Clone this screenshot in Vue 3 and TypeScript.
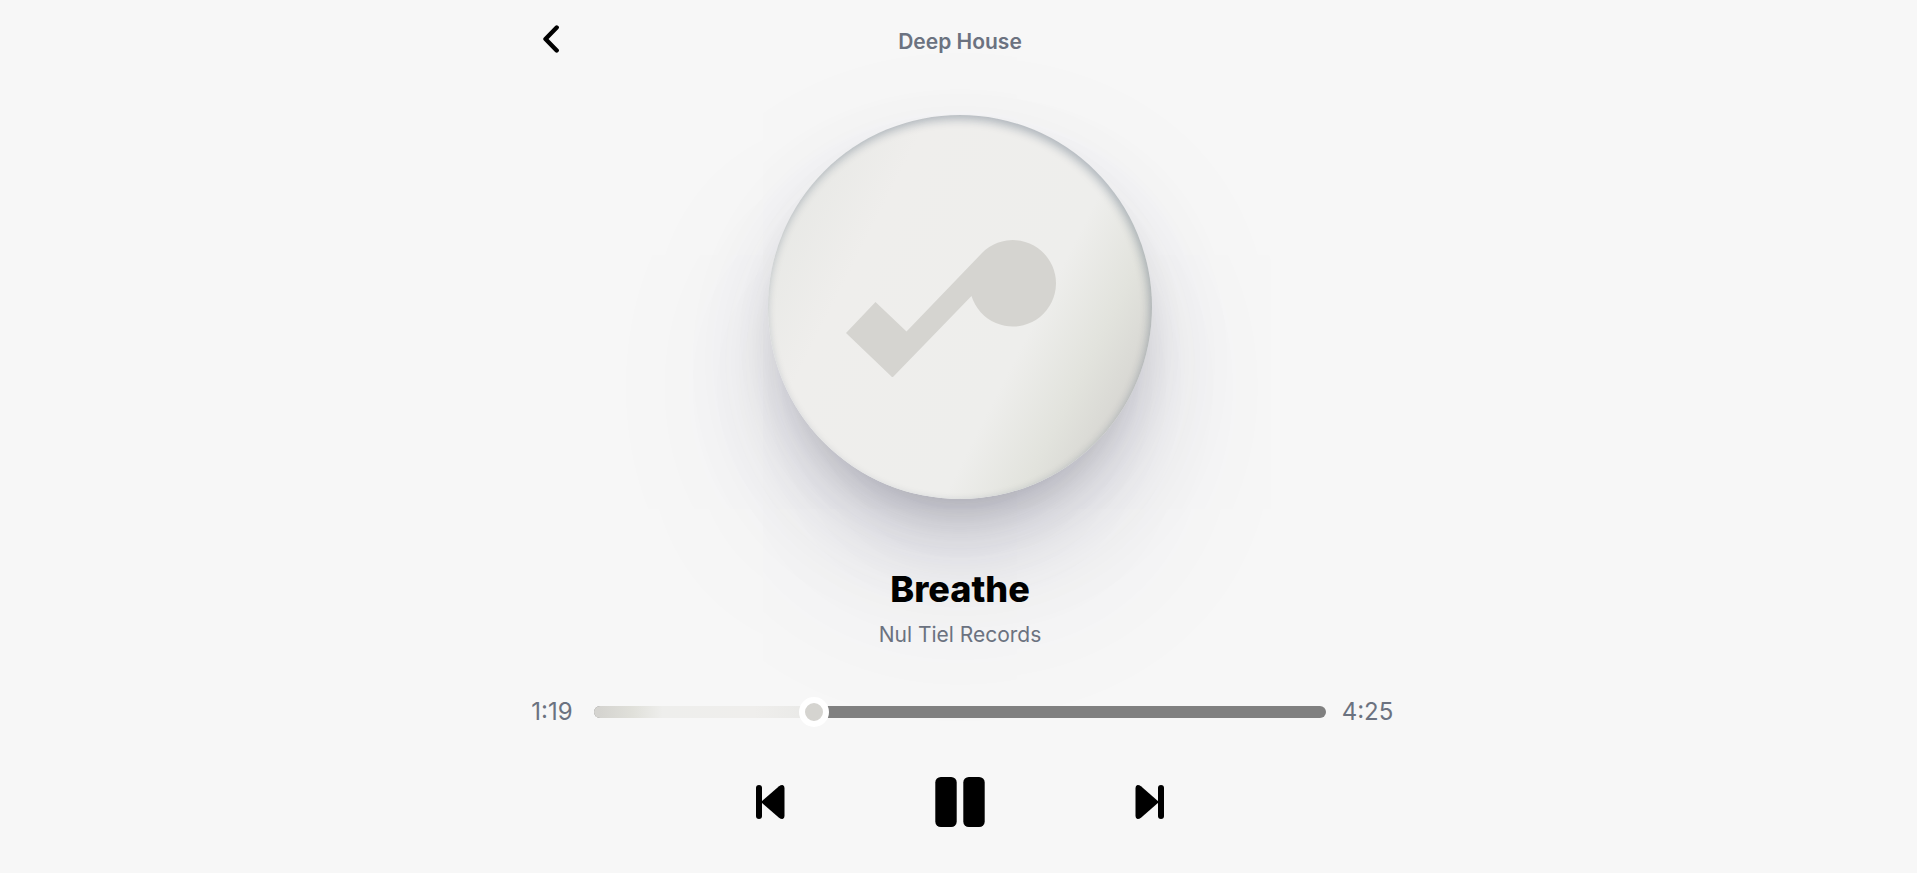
<script setup lang="ts">
import { computed, ref } from 'vue'

const track = { genre: 'Deep House', title: 'Breathe', artist: 'Nul Tiel Records' }
const duration = 265
const elapsed = ref(79)
const progress = ref(29.2)
const playing = ref(true)

function clock(seconds: number): string {
  return `${Math.floor(seconds / 60)}:${String(seconds % 60).padStart(2, '0')}`
}

function seek(): void {
  elapsed.value = Math.round((progress.value / 100) * duration)
}

const played = computed(() => `${progress.value}%`)
</script>

<template>
  <main class="page">
    <section class="player" aria-label="Music player">
      <header class="header">
        <button class="icon-button back" type="button" aria-label="Back">
          <svg width="16" height="28" viewBox="0 0 16 28" aria-hidden="true">
            <path d="M13.700 2.500 2.500 14 13.700 25.500" fill="none" stroke="#000" stroke-width="4.400" stroke-linecap="round" stroke-linejoin="round" />
          </svg>
        </button>
        <p class="genre">{{ track.genre }}</p>
      </header>

      <div class="cover">
        <svg class="cover-mark" viewBox="0 -3 228 140" aria-hidden="true">
          <path d="M0 93 29.500 62 60.500 91.500 136 13A43.200 43.200 0 1 1 125.500 56L46.500 137.500Z" />
        </svg>
      </div>

      <h1 class="title">{{ track.title }}</h1>
      <p class="artist">{{ track.artist }}</p>

      <div class="progress">
        <span class="time">{{ clock(elapsed) }}</span>
        <div class="slider">
          <div class="rail"><div class="fill" :style="{ width: played }"></div></div>
          <input v-model.number="progress" class="range" type="range" min="0" max="100" step="0.1" aria-label="Playback position" @input="seek" />
        </div>
        <span class="time end">{{ clock(duration) }}</span>
      </div>

      <div class="controls">
        <button class="icon-button" type="button" aria-label="Previous track">
          <svg width="30" height="36" viewBox="0 0 30 36" aria-hidden="true">
            <rect x="1" y="1" width="6" height="34" rx="3" />
            <path d="M6 18 24 2.200Q26 0.800 27.500 1Q29.500 1.500 29.500 4V32Q29.500 34.500 27.500 35Q26 35.200 24 33.800Z" />
          </svg>
        </button>
        <button class="icon-button" type="button" :aria-label="playing ? 'Pause' : 'Play'" @click="playing = !playing">
          <svg width="50" height="50" viewBox="0 0 50 50" aria-hidden="true">
            <template v-if="playing">
              <rect x="0.3" width="21.400" height="50" rx="5.500" />
              <rect x="28.300" width="21.400" height="50" rx="5.500" />
            </template>
            <path v-else d="M8 2 46 25 8 48Z" />
          </svg>
        </button>
        <button class="icon-button" type="button" aria-label="Next track">
          <svg width="30" height="36" viewBox="0 0 30 36" aria-hidden="true">
            <rect x="23" y="1" width="6" height="34" rx="3" />
            <path d="M24 18 6 2.200Q4 0.800 2.500 1Q0.500 1.500 0.500 4V32Q0.500 34.500 2.500 35Q4 35.200 6 33.800Z" />
          </svg>
        </button>
      </div>
    </section>
  </main>
</template>

<style>
body {
  margin: 0;
  background: #f7f7f7;
}
</style>

<style scoped>
.page {
  display: flex;
  justify-content: center;
  min-height: 100vh;
  box-sizing: border-box;
  padding-left: 3px;
  overflow: hidden;
  background: #f7f7f7;
  font-family: Inter, "Liberation Sans", sans-serif;
  color: #6b7280;
}
.player {
  display: flex;
  flex-direction: column;
  align-items: center;
  width: 45%;
  min-width: 480px;
}
.header {
  display: grid;
  grid-template-columns: 1fr auto 1fr;
  align-items: start;
  width: 100%;
  height: 115px;
  padding: 25px 14px 0;
  box-sizing: border-box;
}
.icon-button {
  display: flex;
  padding: 0;
  border: 0;
  background: none;
  color: #000;
  cursor: pointer;
}
.back {
  justify-self: start;
}
.genre {
  margin: 3px 0 0;
  font-size: 21px;
  line-height: 28px;
  font-weight: 600;
}
.cover {
  display: grid;
  place-items: center;
  width: 384px;
  height: 384px;
  border-radius: 50%;
  background: linear-gradient(117deg, #e6e7e4 8%, #efeeec 28%, #eeeeec 64%, #e2e3dd 77%, #d5d4d0 89%);
  box-shadow:
    0 80px 200px rgba(50, 50, 93, 0.08),
    0 54px 100px -20px rgba(50, 50, 93, 0.24),
    0 30px 60px -30px rgba(0, 0, 0, 0.24),
    inset -2px 4px 10px rgba(10, 37, 64, 0.28);
}
.cover-mark {
  width: 228px;
  height: 140px;
  fill: #d5d4d0;
}
.title {
  margin: 66px 0 0;
  font-size: 36px;
  line-height: 48px;
  font-weight: 800;
  color: #000;
}
.artist {
  margin: 8px 0 0;
  font-size: 21px;
  line-height: 28px;
  font-weight: 400;
}
.progress {
  display: flex;
  align-items: center;
  width: 100%;
  margin-top: 47px;
}
.time {
  box-sizing: border-box;
  width: 65px;
  padding-left: 2px;
  font-size: 24px;
  line-height: 32px;
  font-weight: 400;
}
.end {
  padding-left: 16px;
}
.slider {
  display: grid;
  flex: 1;
  align-items: center;
}
.rail,
.range {
  grid-area: 1 / 1;
}
.rail {
  height: 12px;
  border-radius: 6px;
  overflow: hidden;
  background: #808080;
}
.fill {
  height: 100%;
  background: linear-gradient(90deg, #d5d4d0 0%, #d5d4d0 3%, #e0e0da 18%, #eeeeec 32%, #efeeec 75%, #e9e9e7 100%);
}
.range {
  z-index: 1;
  width: 100%;
  height: 30px;
  margin: 0;
  appearance: none;
  background: none;
  cursor: pointer;
}
.range::-webkit-slider-thumb {
  appearance: none;
  box-sizing: border-box;
  width: 30px;
  height: 30px;
  border: 6px solid #fff;
  border-radius: 50%;
  background: #d5d4d0;
}
.controls {
  display: flex;
  align-items: center;
  justify-content: space-between;
  width: 410px;
  margin-top: 49px;
}
</style>
